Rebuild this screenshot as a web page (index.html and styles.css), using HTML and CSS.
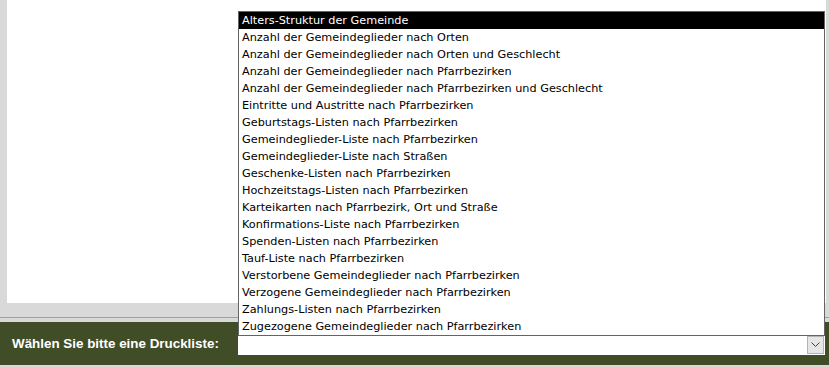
FILE: index.html
```html
<!DOCTYPE html>
<html lang="de">
<head>
<meta charset="utf-8">
<title>Druckliste</title>
<link rel="stylesheet" href="styles.css">
</head>
<body>
<div class="page">
  <div class="panel"></div>
  <div class="gap"></div>
  <div class="bar">
    <span class="label">Wählen Sie bitte eine Druckliste:</span>
    <div class="select">
      <span class="btn">
        <svg width="9" height="6" viewBox="0 0 9 6"><path d="M0.5 0.5 L4.5 4.5 L8.5 0.5" fill="none" stroke="#404040" stroke-width="1"/></svg>
      </span>
    </div>
  </div>
  <ul class="listbox">
    <li class="sel">Alters-Struktur der Gemeinde</li>
    <li>Anzahl der Gemeindeglieder nach Orten</li>
    <li>Anzahl der Gemeindeglieder nach Orten und Geschlecht</li>
    <li>Anzahl der Gemeindeglieder nach Pfarrbezirken</li>
    <li>Anzahl der Gemeindeglieder nach Pfarrbezirken und Geschlecht</li>
    <li>Eintritte und Austritte nach Pfarrbezirken</li>
    <li>Geburtstags-Listen nach Pfarrbezirken</li>
    <li>Gemeindeglieder-Liste nach Pfarrbezirken</li>
    <li>Gemeindeglieder-Liste nach Straßen</li>
    <li>Geschenke-Listen nach Pfarrbezirken</li>
    <li>Hochzeitstags-Listen nach Pfarrbezirken</li>
    <li>Karteikarten nach Pfarrbezirk, Ort und Straße</li>
    <li>Konfirmations-Liste nach Pfarrbezirken</li>
    <li>Spenden-Listen nach Pfarrbezirken</li>
    <li>Tauf-Liste nach Pfarrbezirken</li>
    <li>Verstorbene Gemeindeglieder nach Pfarrbezirken</li>
    <li>Verzogene Gemeindeglieder nach Pfarrbezirken</li>
    <li>Zahlungs-Listen nach Pfarrbezirken</li>
    <li>Zugezogene Gemeindeglieder nach Pfarrbezirken</li>
  </ul>
</div>
</body>
</html>
```
FILE: styles.css
```css
html, body {
  margin: 0;
  padding: 0;
  background: #d9d9d9;
}
.page {
  position: relative;
  width: 829px;
  height: 367px;
  overflow: hidden;
}
.panel {
  margin-left: 7px;
  width: 819px;
  height: 303px;
  background: #ffffff;
}
.gap {
  height: 14px;
  border-bottom: 1px solid #a0a0a0;
  margin-bottom: 4px;
}
.bar {
  height: 43px;
  background: #414d27;
  display: flex;
  align-items: center;
}
.label {
  font-family: "Liberation Sans", Arial, sans-serif;
  font-weight: bold;
  font-size: 13.4px;
  color: #ffffff;
  margin-left: 12px;
  width: 226px;
}
.select {
  width: 587px;
  height: 21px;
  background: #ffffff;
  display: flex;
  justify-content: flex-end;
  align-items: center;
  margin-top: 2px;
}
.btn {
  width: 15px;
  height: 16px;
  margin-right: 1px;
  background: #e6e6e6;
  border: 1px solid #b4b4b4;
  display: flex;
  align-items: center;
  justify-content: center;
}
.listbox {
  position: absolute;
  left: 238px;
  top: 11px;
  width: 585px;
  margin: 0;
  padding: 0;
  list-style: none;
  background: #ffffff;
  border: 1px solid #646464;
  font-family: "DejaVu Sans", Tahoma, sans-serif;
  font-size: 11.25px;
  color: #000000;
}
.listbox li {
  height: 17px;
  line-height: 17px;
  padding-left: 3px;
  white-space: nowrap;
}
.listbox li.sel {
  background: #000000;
  color: #ffffff;
}
```
